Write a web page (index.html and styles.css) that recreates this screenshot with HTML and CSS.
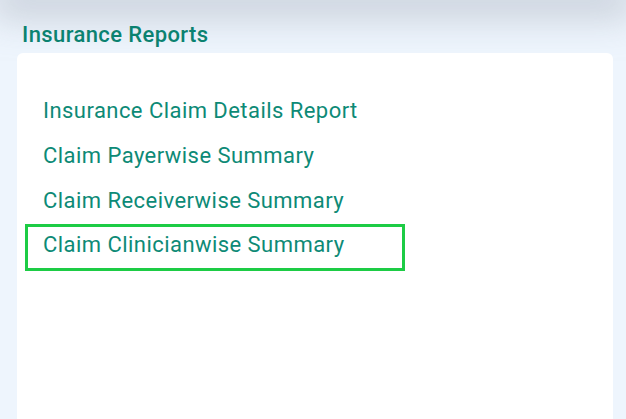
FILE: index.html
```html
<!DOCTYPE html>
<html lang="en">
<head>
  <meta charset="UTF-8">
  <title>Insurance Reports</title>
  <link rel="stylesheet" href="styles.css">
</head>
<body>
  <div class="top-shade"></div>
  <section class="reports">
    <h2 class="reports-title">Insurance Reports</h2>
    <div class="reports-card">
      <ul class="report-list">
        <li><a class="report-link" href="#">Insurance Claim Details Report</a></li>
        <li><a class="report-link" href="#">Claim Payerwise Summary</a></li>
        <li><a class="report-link" href="#">Claim Receiverwise Summary</a></li>
        <li><a class="report-link report-link-active" href="#">Claim Clinicianwise Summary</a></li>
      </ul>
    </div>
  </section>
</body>
</html>
```

FILE: styles.css
```css
html, body {
  height: 100%;
}

body {
  margin: 0;
  font-family: Roboto, 'Noto Sans', sans-serif;
  background: #eef5fd;
  overflow: hidden;
}

.top-shade {
  height: 0;
  margin: 0 10px;
  box-shadow: 0 0 36px 18px rgba(170, 176, 190, 0.55);
}

.reports {
  display: flex;
  flex-direction: column;
  height: 100%;
  padding: 0 13px 0 17px;
  box-sizing: border-box;
}

.reports-title {
  margin: 20px 0 0 5px;
  font-size: 22px;
  font-weight: 500;
  letter-spacing: 0.4px;
  line-height: 30px;
  color: #0b8270;
}

.reports-card {
  flex: 1;
  margin-top: 3px;
  background: #fff;
  border-radius: 6px 6px 0 0;
  padding: 35px 0 0 8px;
}

.report-list {
  list-style: none;
  margin: 0;
  padding: 0;
}

.report-list li {
  height: 45px;
}

.report-link {
  display: inline-block;
  width: 340px;
  padding: 6px 0 0 15px;
  height: 40px;
  box-sizing: border-box;
  border: 3px solid transparent;
  font-size: 22px;
  letter-spacing: 0.45px;
  line-height: 28px;
  color: #0d8a76;
  text-decoration: none;
}

.report-link-active {
  border-color: #1dcc45;
  width: 380px;
  height: 47px;
  margin-top: 1px;
  padding-top: 4px;
}
```
